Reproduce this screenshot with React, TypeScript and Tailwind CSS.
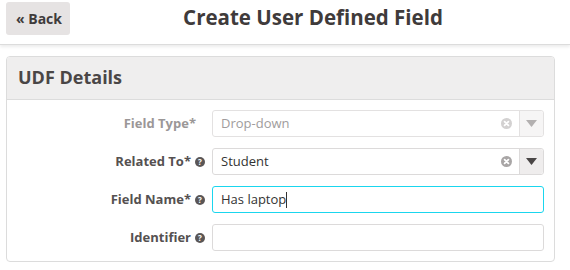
import React from "react";

function HelpIcon() {
  return (
    <svg width="10" height="10" viewBox="0 0 10 10" className="shrink-0">
      <circle cx="5" cy="5" r="5" fill="#5a5656" />
      <text x="5" y="8" textAnchor="middle" fontSize="8" fontWeight="700" fill="#fff" fontFamily="'Open Sans', sans-serif">?</text>
    </svg>
  );
}

function ClearIcon({ color }: { color: string }) {
  return (
    <svg width="11" height="11" viewBox="0 0 11 11">
      <circle cx="5.5" cy="5.5" r="5.5" fill={color} />
      <path d="M3.6 3.6 L7.4 7.4 M7.4 3.6 L3.6 7.4" stroke="#fff" strokeWidth="1.8" strokeLinecap="round" />
    </svg>
  );
}

function Arrow({ color }: { color: string }) {
  return (
    <svg width="11" height="7" viewBox="0 0 11 7">
      <path d="M0 0 H11 L5.5 7 Z" fill={color} />
    </svg>
  );
}

function Label({ text, help, disabled }: { text: string; help?: boolean; disabled?: boolean }) {
  return (
    <div className={`w-[198px] flex items-center justify-end gap-[4px] ${help ? "" : "pr-[9px]"}`}>
      <span className={`text-[13px] font-bold ${disabled ? "text-[#9b9797]" : "text-[#555151]"}`}>{text}</span>
      {help && <HelpIcon />}
    </div>
  );
}

export default function App() {
  return (
    <div className="w-[570px] h-[270px] bg-white overflow-hidden" style={{ fontFamily: "'Open Sans', 'Noto Sans', sans-serif" }}>
      <div className="h-[45px] flex items-start border-b border-[#dcdcdc] shadow-[0_2px_3px_rgba(0,0,0,0.08)]">
        <button className="ml-[6px] mt-[2px] w-[64px] h-[33px] rounded-[3px] bg-[#e6e3e3] text-[14px] font-bold text-[#3f3b3b] flex items-center justify-center pl-[2px]">
          « Back
        </button>
        <div className="flex-1 flex justify-center pr-[14px] pt-[3px]">
          <h1 className="text-[20.5px] font-bold text-[#3f3b3b] leading-[28px]">Create User Defined Field</h1>
        </div>
      </div>
      <div className="ml-[6px] mt-[11px] w-[549px] border border-[#dcdcdc] rounded-[4px] overflow-hidden">
        <div className="h-[43px] bg-[#efeeee] border-b border-[#dcdcdc] flex items-center pl-[11px] pb-[2px]">
          <span className="text-[18px] font-bold text-[#4a4646]">UDF Details</span>
        </div>
        <div className="flex flex-col gap-[11px] pt-[10px] pb-[10px] pr-[10px]">
          <div className="flex items-center gap-[7px]">
            <Label text="Field Type*" disabled />
            <div className="flex-1 h-[27px] border border-[#e3e1e1] rounded-[3px] flex items-center">
              <span className="flex-1 pl-[8px] text-[13px] text-[#a09c9c]">Drop-down</span>
              <div className="w-[26px] flex justify-center"><ClearIcon color="#d3d1d1" /></div>
              <div className="w-[24px] h-full bg-[#f6f5f5] border-l border-[#e3e1e1] flex items-center justify-center rounded-r-[3px]"><Arrow color="#b3b0b0" /></div>
            </div>
          </div>
          <div className="flex items-center gap-[7px]">
            <Label text="Related To*" help />
            <div className="flex-1 h-[27px] border border-[#dcdada] rounded-[3px] flex items-center">
              <span className="flex-1 pl-[8px] text-[13px] text-[#333]">Student</span>
              <div className="w-[26px] flex justify-center"><ClearIcon color="#a9a6a6" /></div>
              <div className="w-[24px] h-full bg-[#efeded] border-l border-[#dcdada] flex items-center justify-center rounded-r-[3px]"><Arrow color="#4a4646" /></div>
            </div>
          </div>
          <div className="flex items-center gap-[7px]">
            <Label text="Field Name*" help />
            <div className="flex-1 h-[27px] border border-[#1ad6ee] rounded-[3px] flex items-center pl-[8px]">
              <span className="text-[13px] text-[#333]">Has laptop</span>
              <span className="w-[1px] h-[16px] bg-[#333]" />
            </div>
          </div>
          <div className="flex items-center gap-[7px]">
            <Label text="Identifier" help />
            <div className="flex-1 h-[27px] border border-[#dcdada] rounded-[3px]" />
          </div>
        </div>
      </div>
    </div>
  );
}
